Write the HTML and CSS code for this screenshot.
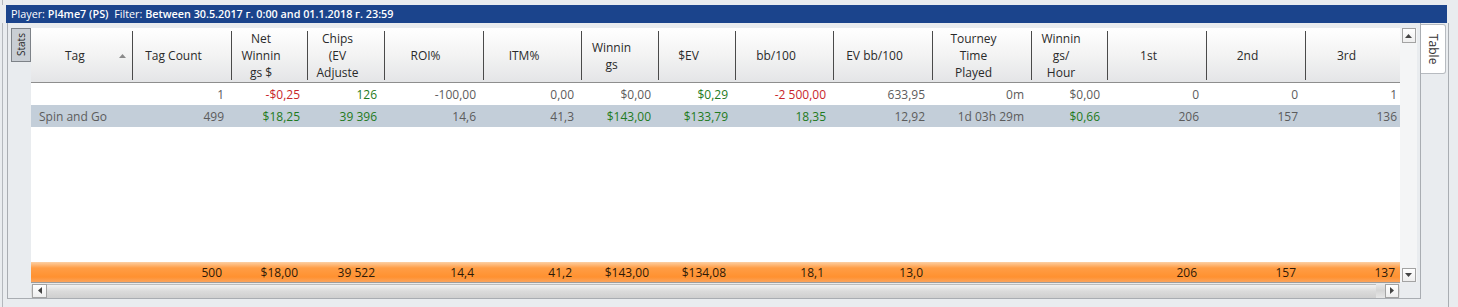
FILE: index.html
```html
<!DOCTYPE html>
<html lang="en">
<head>
    <meta charset="UTF-8">
    <title>Tag Stats</title>
    <link rel="stylesheet" href="styles.css">
</head>
<body>
    <div class="topstrip"></div>
    <div class="titlebar">
        <span>Player:</span> <b>Pl4me7 (PS)</b>&nbsp;&nbsp;<span>Filter:</span> <b>Between 30.5.2017 г. 0:00 and 01.1.2018 г. 23:59</b>
    </div>

    <div class="workspace">
        <div class="frame">
            <div class="side">
                <div class="stats-tab">Stats</div>
            </div>

            <div class="grid-area">
                <div class="grid-top">
                    <div class="grid">
                        <div class="head cols">
                            <div class="hc tag"><span class="tag-label">Tag</span>
                                <svg class="sort" width="7" height="4" viewBox="0 0 7 4"><path d="M0 4 L3.5 0 L7 4 Z" fill="#8a8a8a"/></svg>
                            </div>
                            <div class="hc">Tag Count</div>
                            <div class="hc">Net<br>Winnin<br>gs $</div>
                            <div class="hc">Chips<br>(EV<br>Adjuste</div>
                            <div class="hc">ROI%</div>
                            <div class="hc">ITM%</div>
                            <div class="hc">Winnin<br>gs</div>
                            <div class="hc">$EV</div>
                            <div class="hc">bb/100</div>
                            <div class="hc">EV bb/100</div>
                            <div class="hc">Tourney<br>Time<br>Played</div>
                            <div class="hc">Winnin<br>gs/<br>Hour</div>
                            <div class="hc">1st</div>
                            <div class="hc">2nd</div>
                            <div class="hc">3rd</div>
                        </div>

                        <div class="row cols">
                            <div class="c name"></div>
                            <div class="c">1</div>
                            <div class="c neg">-$0,25</div>
                            <div class="c pos">126</div>
                            <div class="c">-100,00</div>
                            <div class="c">0,00</div>
                            <div class="c">$0,00</div>
                            <div class="c pos">$0,29</div>
                            <div class="c neg">-2 500,00</div>
                            <div class="c">633,95</div>
                            <div class="c">0m</div>
                            <div class="c">$0,00</div>
                            <div class="c">0</div>
                            <div class="c">0</div>
                            <div class="c">1</div>
                        </div>

                        <div class="row selected cols">
                            <div class="c name">Spin and Go</div>
                            <div class="c">499</div>
                            <div class="c pos">$18,25</div>
                            <div class="c pos">39 396</div>
                            <div class="c">14,6</div>
                            <div class="c">41,3</div>
                            <div class="c pos">$143,00</div>
                            <div class="c pos">$133,79</div>
                            <div class="c pos">18,35</div>
                            <div class="c">12,92</div>
                            <div class="c">1d 03h 29m</div>
                            <div class="c pos">$0,66</div>
                            <div class="c">206</div>
                            <div class="c">157</div>
                            <div class="c">136</div>
                        </div>

                        <div class="filler"></div>

                        <div class="total cols">
                            <div class="c"></div>
                            <div class="c">500</div>
                            <div class="c">$18,00</div>
                            <div class="c">39 522</div>
                            <div class="c">14,4</div>
                            <div class="c">41,2</div>
                            <div class="c">$143,00</div>
                            <div class="c">$134,08</div>
                            <div class="c">18,1</div>
                            <div class="c">13,0</div>
                            <div class="c"></div>
                            <div class="c"></div>
                            <div class="c">206</div>
                            <div class="c">157</div>
                            <div class="c">137</div>
                        </div>
                    </div>

                    <div class="vscroll">
                        <div class="sbtn up">
                            <svg width="7" height="4" viewBox="0 0 7 4"><path d="M0 4 L3.5 0 L7 4 Z" fill="#444"/></svg>
                        </div>
                        <div class="vtrack"></div>
                        <div class="sbtn down">
                            <svg width="7" height="4" viewBox="0 0 7 4"><path d="M0 0 L3.5 4 L7 0 Z" fill="#444"/></svg>
                        </div>
                    </div>
                </div>

                <div class="hscroll">
                    <div class="sbtn left">
                        <svg width="4" height="7" viewBox="0 0 4 7"><path d="M4 0 L0 3.5 L4 7 Z" fill="#444"/></svg>
                    </div>
                    <div class="thumb"></div>
                    <div class="sbtn right">
                        <svg width="4" height="7" viewBox="0 0 4 7"><path d="M0 0 L4 3.5 L0 7 Z" fill="#444"/></svg>
                    </div>
                </div>
            </div>
        </div>

        <div class="right-side">
            <div class="table-tab">Table</div>
        </div>
    </div>
</body>
</html>
```

FILE: styles.css
```css
/* Page base */
body {
    margin: 0;
    background: #e9ecef;
    font-family: "Open Sans", "Noto Sans", sans-serif;
    font-size: 12px;
    color: #333;
    overflow: hidden;
}

.topstrip {
    height: 5px;
    border-left: 1px solid #b4b8bd;
    margin-left: 2px;
}

/* Blue filter bar */
.titlebar {
    margin-left: 6px;
    width: 1436px;
    height: 18px;
    padding-left: 5px;
    background: #1b448c;
    color: #fff;
    font-size: 10.8px;
    line-height: 18px;
    white-space: nowrap;
}

.titlebar b {
    font-weight: 600;
}

/* Main area below the bar */
.workspace {
    display: flex;
    margin-left: 2px;
    border-left: 1px solid #b4b8bd;
    height: 284px;
}

.frame {
    display: flex;
    margin-left: 4px;
    width: 1412px;
    height: 275px;
    border-left: 1px solid #a9adb2;
    border-right: 1px solid #a9adb2;
    border-bottom: 1px solid #a9adb2;
}

.side {
    width: 23px;
    padding-top: 5px;
}

.stats-tab {
    margin-left: 3px;
    width: 18px;
    height: 32px;
    background: #c9ced4;
    border: 1px solid #7d8288;
    writing-mode: vertical-rl;
    transform: rotate(180deg);
    font-size: 10px;
    line-height: 18px;
    text-align: center;
    color: #222;
}

.grid-area {
    padding-top: 5px;
    width: 1386px;
}

.grid-top {
    display: flex;
    height: 254px;
}

/* Data grid */
.grid {
    width: 1369px;
    display: flex;
    flex-direction: column;
    background: #fff;
    overflow: hidden;
}

.cols {
    display: grid;
    grid-template-columns: 102px 99px 76px 77px 99px 98px 77px 77px 98px 99px 99px 76px 99px 99px 99px;
    width: 1374px;
}

.head {
    height: 51px;
    padding-top: 3px;
    background: linear-gradient(#ffffff, #f3f3f3 50%, #e4e5e7);
    border-bottom: 1px solid #8e8e8e;
}

.hc {
    display: flex;
    align-items: center;
    justify-content: center;
    height: 49px;
    padding-right: 17px;
    border-right: 1px solid #4a4a4a;
    text-align: center;
    line-height: 17px;
    color: #2a2a2a;
    overflow: hidden;
}

.hc.tag {
    justify-content: flex-start;
    padding-right: 0;
}

.tag-label {
    margin-left: 34px;
}

.sort {
    margin-left: 34px;
}

.row {
    height: 22px;
    align-items: center;
    color: #5c5c5c;
}

.row:first-of-type {
    height: 23px;
}

.row.selected {
    background: #c3ced9;
}

.c {
    text-align: right;
    padding-right: 8px;
    white-space: nowrap;
}

.c.name {
    text-align: left;
    padding-left: 8px;
}

.neg {
    color: #c8262a;
}

.pos {
    color: #1f7a21;
}

.filler {
    flex: 1;
}

.total {
    height: 20px;
    align-items: center;
    background: linear-gradient(#fcd0a4, #ff9d45 30%, #ff9130 75%, #fba45c);
    color: #2e1a08;
}

.total .c {
    padding-right: 10px;
}

/* Scroll bars */
.vscroll {
    width: 17px;
    display: flex;
    flex-direction: column;
    align-items: center;
    background: #f4f5f6;
}

.vtrack {
    flex: 1;
}

.sbtn {
    display: flex;
    align-items: center;
    justify-content: center;
    box-sizing: border-box;
    width: 14px;
    height: 15px;
    border: 1px solid #a3a3a3;
    background: linear-gradient(#ffffff, #eeeeee);
}

.sbtn.down {
    height: 14px;
}

.hscroll {
    display: flex;
    align-items: center;
    width: 1369px;
    height: 15px;
    border-top: 1px solid #9c9c9c;
    background: linear-gradient(#ececec, #d5d5d5 50%, #e6e6e6);
}

.sbtn.left {
    margin-left: 1px;
    width: 15px;
    height: 14px;
}

.sbtn.right {
    margin-left: 9px;
    width: 14px;
    height: 14px;
}

.thumb {
    width: 1329px;
    height: 13px;
    border-top: 1px solid #bdbdbd;
    background: linear-gradient(#f2f2f2, #dadada 50%, #cfcfcf);
}

/* Right hand tab strip */
.right-side {
    width: 27px;
    border-right: 1px solid #a9adb2;
}

.table-tab {
    margin-top: 1px;
    width: 24px;
    height: 48px;
    background: #ffffff;
    border: 1px solid #b7bbc0;
    border-left: none;
    border-radius: 0 3px 3px 0;
    writing-mode: vertical-rl;
    text-align: center;
    line-height: 24px;
    color: #333;
}
```
